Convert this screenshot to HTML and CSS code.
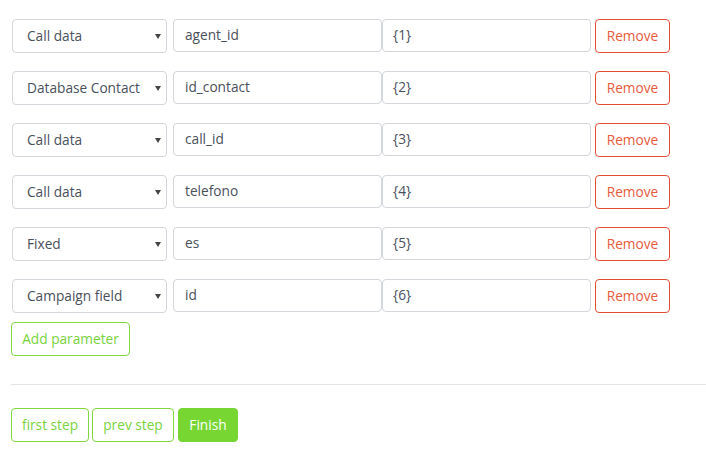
FILE: index.html
```html
<!DOCTYPE html>
<html>
<head>
<meta charset="utf-8">
<link rel="stylesheet" href="styles.css">
</head>
<body>
<div class="page">
  <div class="params">
    <div class="row">
      <div class="select"><span>Call data</span><span class="caret"></span></div>
      <div class="input name">agent_id</div>
      <div class="input val">{1}</div>
      <button class="btn btn-danger">Remove</button>
    </div>
    <div class="row">
      <div class="select"><span>Database Contact</span><span class="caret"></span></div>
      <div class="input name">id_contact</div>
      <div class="input val">{2}</div>
      <button class="btn btn-danger">Remove</button>
    </div>
    <div class="row">
      <div class="select"><span>Call data</span><span class="caret"></span></div>
      <div class="input name">call_id</div>
      <div class="input val">{3}</div>
      <button class="btn btn-danger">Remove</button>
    </div>
    <div class="row">
      <div class="select"><span>Call data</span><span class="caret"></span></div>
      <div class="input name">telefono</div>
      <div class="input val">{4}</div>
      <button class="btn btn-danger">Remove</button>
    </div>
    <div class="row">
      <div class="select"><span>Fixed</span><span class="caret"></span></div>
      <div class="input name">es</div>
      <div class="input val">{5}</div>
      <button class="btn btn-danger">Remove</button>
    </div>
    <div class="row last">
      <div class="select"><span>Campaign field</span><span class="caret"></span></div>
      <div class="input name">id</div>
      <div class="input val">{6}</div>
      <button class="btn btn-danger">Remove</button>
    </div>
  </div>
  <button class="btn btn-success add">Add parameter</button>
  <hr class="divider">
  <div class="steps">
    <button class="btn btn-success">first step</button>
    <button class="btn btn-success">prev step</button>
    <button class="btn btn-primary">Finish</button>
  </div>
</div>
</body>
</html>
```
FILE: styles.css
```css
* { box-sizing: border-box; }
body {
  margin: 0;
  font-family: "Open Sans", Lato, "DejaVu Sans", sans-serif;
  font-size: 13.7px;
  color: #4c525d;
  background: #fff;
}
.page {
  padding: 19px 0 0 11px;
}
.params {
  display: flex;
  flex-direction: column;
  gap: 18px;
  padding-left: 1px;
}
.row {
  display: flex;
  align-items: flex-start;
}
.select {
  width: 155px;
  height: 34px;
  border: 1px solid #d3d6db;
  border-radius: 4px;
  display: flex;
  align-items: center;
  justify-content: space-between;
  padding: 0 5px 1px 14px;
  margin-right: 6px;
  color: #4a505b;
  white-space: nowrap;
}
.caret {
  width: 0;
  height: 0;
  border-left: 3px solid transparent;
  border-right: 3px solid transparent;
  border-top: 5px solid #444;
  margin-top: 2px;
}
.input {
  height: 33px;
  border: 1px solid #d3d6db;
  border-radius: 4px;
  display: flex;
  align-items: center;
  color: #4a505b;
  padding-bottom: 3px;
}
.name {
  width: 209px;
  padding-left: 11px;
}
.val {
  width: 209px;
  padding-left: 10px;
}
.btn {
  font-family: inherit;
  font-size: 13.7px;
  height: 34px;
  border-radius: 4px;
  background: #fff;
  padding: 0 0 1px;
  cursor: pointer;
  line-height: 1;
  white-space: nowrap;
  text-align: center;
}
.btn-danger {
  margin-left: 4px;
  width: 75px;
  border: 1px solid #df4f33;
  color: #e85a3e;
}
.btn-success {
  border: 1px solid #80d840;
  color: #78d33c;
}
.btn-primary {
  border: 1px solid #77d632;
  background: #77d632;
  color: #fff;
}
.add {
  margin-top: 9px;
  width: 119px;
  display: block;
}
.divider {
  margin: 28px 0 0 0;
  border: 0;
  border-top: 1px solid #e3e3e3;
  height: 0;
}
.steps {
  display: flex;
  margin-top: 23px;
}
.steps .btn:nth-child(1) { width: 78px; margin-right: 3px; }
.steps .btn:nth-child(2) { width: 82px; margin-right: 4px; }
.steps .btn:nth-child(3) { width: 60px; }
```
